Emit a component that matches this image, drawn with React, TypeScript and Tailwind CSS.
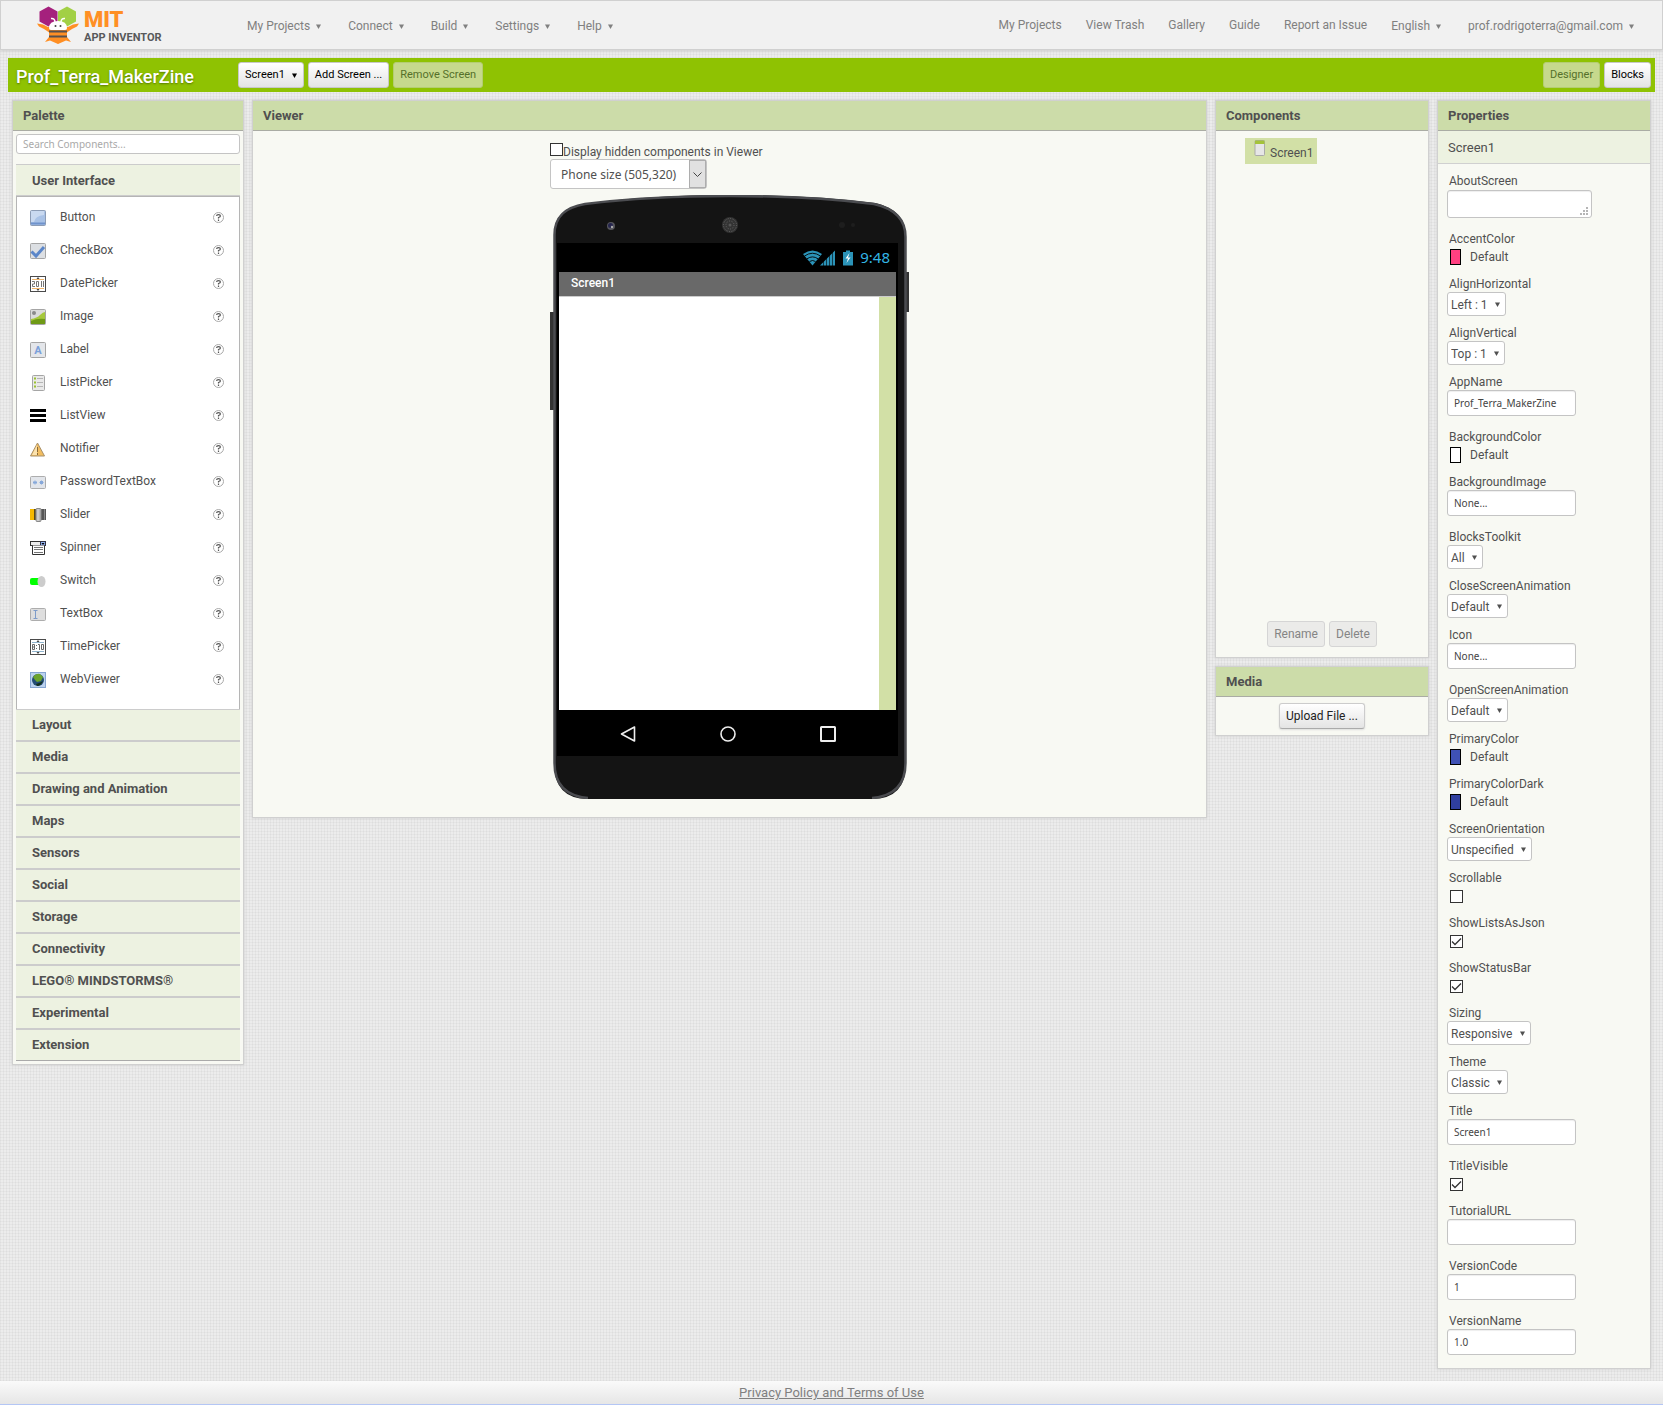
import { useState } from 'react';
import type { ReactNode } from 'react';

const leftMenu = ['My Projects', 'Connect', 'Build', 'Settings', 'Help'];
const rightLinks = ['My Projects', 'View Trash', 'Gallery', 'Guide', 'Report an Issue'];
const rightMenu = ['English', 'prof.rodrigoterra@gmail.com'];

const categories = [
  'Layout',
  'Media',
  'Drawing and Animation',
  'Maps',
  'Sensors',
  'Social',
  'Storage',
  'Connectivity',
  'LEGO® MINDSTORMS®',
  'Experimental',
  'Extension',
];

type Property = {
  name: string;
  type: 'textarea' | 'text' | 'select' | 'color' | 'check';
  value?: string;
  checked?: boolean;
};

const properties: Property[] = [
  { name: 'AboutScreen', type: 'textarea' },
  { name: 'AccentColor', type: 'color', value: '#ff4081' },
  { name: 'AlignHorizontal', type: 'select', value: 'Left : 1' },
  { name: 'AlignVertical', type: 'select', value: 'Top : 1' },
  { name: 'AppName', type: 'text', value: 'Prof_Terra_MakerZine' },
  { name: 'BackgroundColor', type: 'color', value: '#ffffff' },
  { name: 'BackgroundImage', type: 'text', value: 'None...' },
  { name: 'BlocksToolkit', type: 'select', value: 'All' },
  { name: 'CloseScreenAnimation', type: 'select', value: 'Default' },
  { name: 'Icon', type: 'text', value: 'None...' },
  { name: 'OpenScreenAnimation', type: 'select', value: 'Default' },
  { name: 'PrimaryColor', type: 'color', value: '#3f51b5' },
  { name: 'PrimaryColorDark', type: 'color', value: '#303f9f' },
  { name: 'ScreenOrientation', type: 'select', value: 'Unspecified' },
  { name: 'Scrollable', type: 'check', checked: false },
  { name: 'ShowListsAsJson', type: 'check', checked: true },
  { name: 'ShowStatusBar', type: 'check', checked: true },
  { name: 'Sizing', type: 'select', value: 'Responsive' },
  { name: 'Theme', type: 'select', value: 'Classic' },
  { name: 'Title', type: 'text', value: 'Screen1' },
  { name: 'TitleVisible', type: 'check', checked: true },
  { name: 'TutorialURL', type: 'text', value: '' },
  { name: 'VersionCode', type: 'text', value: '1' },
  { name: 'VersionName', type: 'text', value: '1.0' },
];

// 16x16 drawings for the palette
const paletteItems: { name: string; icon: ReactNode }[] = [
  {
    name: 'Button',
    icon: (
      <>
        <rect x="0.5" y="0.5" width="15" height="15" rx="1" fill="#a9c2e6" stroke="#8c9cb5" />
        <path d="M1 1h13v4Q5 6 4 12H1z" fill="#c9d9f0" />
        <path d="M1 13.5h14" stroke="#6f93cc" strokeWidth="2" />
      </>
    ),
  },
  {
    name: 'CheckBox',
    icon: (
      <>
        <rect x="0.5" y="0.5" width="15" height="15" rx="1" fill="#dcdfe3" stroke="#a5a5a5" />
        <path d="M1.500 8.500l4.500 4.500L14 4" fill="none" stroke="#5b86c9" strokeWidth="3" />
      </>
    ),
  },
  {
    name: 'DatePicker',
    icon: (
      <>
        <rect x="0.5" y="0.5" width="15" height="15" fill="#fff" stroke="#4a4a4a" />
        <path d="M2 3.500h12M2 12.500h12" stroke="#f0b46a" />
        <path d="M6.500 3h3L8 1zM6.500 13h3L8 15z" fill="#444" />
        <path d="M2 5.500h2.500v2.500h-2v2.500h2.500M6.500 5.500h2v5h-2zM11.500 5v6M13.500 5v6" fill="none" stroke="#777" />
      </>
    ),
  },
  {
    name: 'Image',
    icon: (
      <>
        <rect x="0.5" y="0.5" width="15" height="15" rx="1" fill="#dcdcdc" stroke="#a5a5a5" />
        <path d="M1 10Q7 9 10 6T15 3v12H1z" fill="#a6c83c" />
        <path d="M1 15v-3q6-3 14-2v5z" fill="#6f9a16" />
        <circle cx="4" cy="4" r="2" fill="#8a8a8a" />
      </>
    ),
  },
  {
    name: 'Label',
    icon: (
      <>
        <rect x="0.5" y="0.5" width="15" height="15" rx="1" fill="#e4e6ea" stroke="#a5a5a5" />
        <text x="8" y="12" textAnchor="middle" fontSize="11" fontWeight="700" fontFamily="Roboto, sans-serif" fill="#7ba0da">
          A
        </text>
      </>
    ),
  },
  {
    name: 'ListPicker',
    icon: (
      <>
        <rect x="2.500" y="0.5" width="12" height="15" rx="1" fill="#e9e9e9" stroke="#a5a5a5" />
        <path d="M4 3.500h2M4 7.500h2M4 11.500h2" stroke="#9ac22e" strokeWidth="2" />
        <path d="M7 3.500h6M7 7.500h6M7 11.500h6" stroke="#b5b5b5" />
      </>
    ),
  },
  {
    name: 'ListView',
    icon: <path d="M0 2.500h16M0 7.500h16M0 12.500h16" stroke="#000" strokeWidth="3" />,
  },
  {
    name: 'Notifier',
    icon: (
      <>
        <path d="M7.500 2L14.500 15H0.500z" fill="#f2bd60" stroke="#a8906a" strokeLinejoin="round" />
        <path d="M7 4L2 14h5z" fill="#fbe3b0" />
        <path d="M7.500 6v5M7.500 12v2" stroke="#8a6a38" />
      </>
    ),
  },
  {
    name: 'PasswordTextBox',
    icon: (
      <>
        <rect x="0.5" y="2.500" width="15" height="12" rx="1" fill="#e2e5ea" stroke="#adadad" />
        <path d="M3 8.500h4M5 6.500v4M9.500 8.500h4M11.500 6.500v4M3.500 7l3 3M6.500 7l-3 3M10 7l3 3M13 7l-3 3" stroke="#86a8da" />
      </>
    ),
  },
  {
    name: 'Slider',
    icon: (
      <>
        <rect x="0" y="2" width="6" height="11" fill="#f5b800" />
        <rect x="11" y="2" width="5" height="11" fill="#555" />
        <rect x="4" y="2" width="2" height="11" fill="#5a4a1a" />
        <rect x="6" y="1.500" width="5" height="13" rx="1" fill="#b8b8b8" stroke="#8a8a8a" />
        <path d="M8 2v12" stroke="#ddd" />
        <path d="M14.500 2v11" stroke="#888" />
      </>
    ),
  },
  {
    name: 'Spinner',
    icon: (
      <>
        <rect x="0.5" y="1.500" width="15" height="4" fill="#eee" stroke="#333" />
        <rect x="10.500" y="1.500" width="5" height="4" fill="#8fb0ef" stroke="#334" />
        <path d="M11.500 3h3L13 5z" fill="#000" />
        <path d="M2.500 5.500v9h12v-9" fill="#fff" stroke="#333" />
        <path d="M4 7.500h9M4 9.500h9M4 12.500h9" stroke="#777" />
      </>
    ),
  },
  {
    name: 'Switch',
    icon: (
      <>
        <rect x="0" y="5" width="13" height="7" rx="2" fill="#0f0" />
        <ellipse cx="11.500" cy="8.500" rx="4" ry="5.500" fill="#ccc" />
      </>
    ),
  },
  {
    name: 'TextBox',
    icon: (
      <>
        <rect x="0.5" y="2.500" width="15" height="12" rx="1" fill="#dedede" stroke="#adadad" />
        <path d="M3.500 4.500h4M3.500 12.500h4M5.500 4.500v8" stroke="#7f9cc9" />
      </>
    ),
  },
  {
    name: 'TimePicker',
    icon: (
      <>
        <rect x="0.5" y="0.5" width="15" height="15" fill="#fff" stroke="#4a4a4a" />
        <path d="M2 3.500h12M2 12.500h12" stroke="#8fb3cc" />
        <path d="M6.500 3h3L8 1zM6.500 13h3L8 15z" fill="#444" />
        <path d="M2.500 5.500h2v5h-2zM2.500 8h2M6.500 6v1M6.500 9v1M8 5.500h1.500V11M11.500 5.500h2v5h-2z" fill="none" stroke="#666" />
      </>
    ),
  },
  {
    name: 'WebViewer',
    icon: (
      <>
        <rect x="0.5" y="0.5" width="15" height="15" fill="#bcd2ee" stroke="#85a5d2" />
        <circle cx="8" cy="8" r="6" fill="#234d75" />
        <path d="M3 5q3-4 7-3l3 3-2 4-4 1-2-2z" fill="#6ba32c" />
        <path d="M6 12q4-1 7-3-2 5-6 5z" fill="#15301c" />
      </>
    ),
  },
];

function Caret({ className = '' }: { className?: string }) {
  return (
    <svg className={`h-[5px] w-[5px] shrink-0 ${className}`} viewBox="0 0 5 5" fill="currentColor" aria-hidden="true">
      <path d="M0 0.500h5L2.500 5z" />
    </svg>
  );
}

function Logo() {
  return (
    <a href="#" className="flex w-[210px] shrink-0 items-start gap-[5px]" aria-label="MIT App Inventor">
      <svg className="h-[38px] w-[42px] shrink-0" viewBox="0 0 42 38" aria-hidden="true">
        <path d="M11.500 0.500L20.500 5.500V15.500L11.500 20.500L2.500 15.500V5.500z" fill="#a5207d" />
        <path d="M30 0.500L39 5.500V15.500L30 20.500L21 15.500V5.500z" fill="#a2d045" />
        <path d="M0 17.500L6 18.500 11 21h20l5-2.500 6-1-2 3-5 2.500-6 4H13l-6-4-5-2.500z" fill="#ff8f24" />
        <path d="M12 31l-4 5 5-1.500 8 3.500 8-3.500 5 1.500-4-5z" fill="#ff8f24" />
        <path d="M12 22h18v9l-9 6.500L12 31z" fill="#ff8f24" />
        <path d="M12 22Q12 15 21 15T30 22q0 2-2 2H14q-2 0-2-2z" fill="#fff" />
        <path d="M14 12.500q4-0.500 4 4M28 12.500q-4-0.500-4 4" fill="none" stroke="#fff" strokeWidth="1.500" />
        <circle cx="18.500" cy="20" r="1" fill="#444" />
        <circle cx="23.500" cy="20" r="1" fill="#444" />
        <path d="M12 25.500h18M12 30.500h18" stroke="#57504e" strokeWidth="2" />
      </svg>
      <span className="flex flex-col pt-[3px]">
        <span className="text-[22px] leading-[22px] font-black text-[#ff8f24]">MIT</span>
        <span className="text-[11px] leading-[13px] font-bold text-[#58595b]">APP INVENTOR</span>
      </span>
    </a>
  );
}

function TopBar() {
  return (
    <header className="flex h-[50px] items-center justify-between border border-[#d0d0d0] bg-[#f1f1f1] pr-7 pl-9 text-[12px] text-[#808080] shadow-[0_1px_3px_#ccc]">
      <div className="flex items-center">
        <Logo />
        <nav className="flex items-center gap-[27px]">
          {leftMenu.map((item) => (
            <button key={item} className="flex items-center gap-[6px] pt-[2px]">
              {item}
              <Caret />
            </button>
          ))}
        </nav>
      </div>
      <nav className="flex items-center gap-6">
        {rightLinks.map((item) => (
          <a key={item} href="#">
            {item}
          </a>
        ))}
        {rightMenu.map((item) => (
          <button key={item} className="flex items-center gap-[6px] pt-[2px] last:ml-[3px]">
            {item}
            <Caret />
          </button>
        ))}
      </nav>
    </header>
  );
}

const barButton =
  'flex h-[26px] items-center gap-[7px] rounded-[3px] border border-[#c8c8c8] bg-linear-to-b from-white to-[#e4e4e4] px-[6px] pt-px text-[11px] text-black';
const barButtonOff =
  'flex h-[26px] items-center rounded-[3px] border border-[#b4cd72] bg-[#c6d98d] px-[6px] pt-px text-[11px] text-[#55702a]';

function ProjectBar() {
  return (
    <div className="mx-2 mt-2 flex h-[34px] items-center bg-[#8fc202] pr-1 pl-2">
      <h1 className="w-[222px] pt-[2px] text-[18px] font-medium text-white [text-shadow:0_1px_2px_#557700]">Prof_Terra_MakerZine</h1>
      <div className="flex gap-1">
        <button className={barButton}>
          Screen1
          <Caret />
        </button>
        <button className={barButton}>Add Screen ...</button>
        <button className={barButtonOff} disabled>
          Remove Screen
        </button>
      </div>
      <div className="ml-auto flex gap-1">
        <button className={barButtonOff} disabled>
          Designer
        </button>
        <button className={barButton}>Blocks</button>
      </div>
    </div>
  );
}

function Panel({ title, className = '', children }: { title: string; className?: string; children: ReactNode }) {
  return (
    <section className={`border border-[#d0d0d0] bg-[#f8f9f3] shadow-[0_0_3px_#ccc] ${className}`}>
      <h2 className="h-[30px] shrink-0 border-b border-[#aaaca4] bg-[#ccdca9] px-[10px] text-[13px] leading-[29px] font-bold text-[#505050]">
        {title}
      </h2>
      {children}
    </section>
  );
}

function Palette() {
  return (
    <Panel title="Palette" className="w-[232px] shrink-0">
      <div className="px-[3px] pt-[3px] pb-[3px]">
        <input
          aria-label="Search Components"
          placeholder="Search Components..."
          className="block h-5 w-full rounded-[3px] border border-[#c4c4c4] bg-white px-[6px] font-['Noto_Sans',sans-serif] text-[10px] placeholder:text-[#a9a9a9]"
        />
        <button className="mt-[10px] block h-8 w-full border-y border-[#ccc] bg-[#edf2e1] px-4 pt-px text-left text-[13px] font-bold text-[#505050]">
          User Interface
        </button>
        <ul className="border-x border-t border-[#b5b5b5] bg-white pt-1 pb-[13px]">
          {paletteItems.map((item) => (
            <li key={item.name} className="flex h-[33px] items-center pr-[15px] pl-[13px] text-[12px] text-[#505050]">
              <svg className="h-4 w-4 shrink-0" viewBox="0 0 16 16" aria-hidden="true">
                {item.icon}
              </svg>
              <span className="ml-[14px] grow pb-[2px]">{item.name}</span>
              <button
                aria-label={`Help for ${item.name}`}
                className="flex h-[11px] w-[11px] items-center justify-center rounded-full border border-[#aaa] text-[#555]"
              >
                <svg className="h-[7px] w-[5px]" viewBox="0 0 5 7" fill="none" stroke="currentColor" strokeWidth="1.200">
                  <path d="M0.600 2Q0.600 0.600 2.500 0.600T4.400 2Q4.400 3 2.500 3.500V4.500M2.500 5.500V7" />
                </svg>
              </button>
            </li>
          ))}
        </ul>
        {categories.map((name) => (
          <button
            key={name}
            className="block h-8 w-full border-y border-[#ccc] bg-[#edf2e1] px-4 text-left text-[13px] font-bold text-[#505050] last:border-b-[#aaa]"
          >
            {name}
          </button>
        ))}
      </div>
    </Panel>
  );
}

function Phone() {
  return (
    <div className="relative flex h-[604px] flex-col px-[7px] pt-12">
      <svg className="absolute inset-0 h-full w-full" viewBox="0 0 359 604" aria-hidden="true">
        <rect x="0" y="117" width="5" height="98" fill="#333" />
        <rect x="354" y="77" width="5" height="40" fill="#333" />
        <path
          d="M4 40C4 20 16 12 34 9Q100 0 180 0T325 8C343 12 356 22 356 42V568Q356 604 322 604H38Q4 604 4 568z"
          fill="#141414"
        />
        <path
          d="M38 603Q4.500 600 4.500 568V40C4.500 20 17 12 35 9Q100 1 180 1T324 9C342 13 355.500 23 355.500 42V568Q355.500 600 322 603"
          fill="none"
          stroke="#4b4c50"
          strokeWidth="2.500"
        />
        <circle cx="61" cy="31" r="4" fill="#55555c" />
        <circle cx="60.500" cy="30.500" r="2.500" fill="#26264e" />
        <circle cx="62" cy="32" r="1.200" fill="#aaa" />
        <circle cx="180" cy="30" r="8" fill="#333" />
        <circle cx="180" cy="30" r="6.500" fill="none" stroke="#666" strokeDasharray="1 1.500" />
        <circle cx="180" cy="30" r="4" fill="none" stroke="#666" strokeDasharray="1 1.500" />
        <circle cx="180" cy="30" r="1.500" fill="#555" />
        <circle cx="292" cy="30" r="3" fill="#1e1e1e" />
        <circle cx="303" cy="30" r="2" fill="#1e1e1e" />
      </svg>
      <div className="relative mr-1 bg-black px-[2px]">
        <div className="flex h-[29px] items-center justify-end pr-[6px] text-[#33b5e5]">
          <svg className="h-4 w-[50px]" viewBox="0 0 50 16" fill="#2b93b8" aria-hidden="true">
            <path d="M0 4Q9.500-3 19 4L9.500 15.500z" />
            <path d="M1.500 6Q9.500 0.500 17.500 6M4 8.800Q9.500 5 15 8.800M6.500 11.500Q9.500 9.500 12.500 11.500" fill="none" stroke="#000" strokeWidth="0.900" />
            <path d="M17 15.500L32 0.500V15.500z" />
            <path d="M20.500 9V16M23.500 6V16M26.500 4V16M29.500 1V16" stroke="#000" strokeWidth="0.600" />
            <path d="M40 2h3V0.500h4V2h3v13.500H40z" />
            <path d="M46.500 3l-4 5.500h2.500l-1.500 4.500 4-5.500H45z" fill="#fff" />
          </svg>
          <span className="ml-[7px] font-['Noto_Sans',sans-serif] text-[15px] leading-[29px]">9:48</span>
        </div>
        <div className="h-6 bg-[#696969] px-3 text-[12px] leading-[22px] font-medium text-white">Screen1</div>
        <div className="flex h-[414px] border-t border-[#ccc] bg-white">
          <div className="grow" />
          <div className="w-[17px] bg-[#d2e0a6]" />
        </div>
        <div className="flex h-[46px] items-center justify-between pt-[2px] pr-[60px] pl-[61px]">
          <svg className="h-4 w-4" viewBox="0 0 16 16" fill="none" stroke="#eee" strokeWidth="1.600" aria-hidden="true">
            <path d="M14.500 1v14L1.500 8z" strokeLinejoin="round" />
          </svg>
          <svg className="h-4 w-4" viewBox="0 0 16 16" fill="none" stroke="#eee" strokeWidth="1.600" aria-hidden="true">
            <circle cx="8" cy="8" r="7" />
          </svg>
          <svg className="h-4 w-4" viewBox="0 0 16 16" fill="none" stroke="#eee" strokeWidth="2" aria-hidden="true">
            <rect x="1" y="1" width="14" height="14" rx="0.500" />
          </svg>
        </div>
      </div>
    </div>
  );
}

function Viewer() {
  return (
    <Panel title="Viewer" className="min-w-0 grow">
      <div className="mx-auto w-[359px] pt-3 pb-[18px]">
        <label className="flex h-4 items-start text-[12px] leading-4 text-[#505050]">
          <CheckBox />
          <span className="pt-px">Display hidden components in Viewer</span>
        </label>
        <div className="relative h-[30px] w-[157px]">
          <select
            aria-label="Preview size"
            className="h-full w-full appearance-none rounded-[3px] border border-[#c4c4c4] bg-white px-[10px] pt-px font-['Noto_Sans',sans-serif] text-[12px] text-[#505050]"
          >
            <option>Phone size (505,320)</option>
          </select>
          <span className="pointer-events-none absolute inset-y-px right-px flex w-[17px] items-center justify-center border border-[#adadad] bg-[#e1e1e1]">
            <svg className="h-[5px] w-[9px]" viewBox="0 0 9 5" fill="none" stroke="#444">
              <path d="M0.500 0.500l4 4 4-4" />
            </svg>
          </span>
        </div>
        <div className="pt-[6px]">
          <Phone />
        </div>
      </div>
    </Panel>
  );
}

function CheckBox({ id, defaultChecked = false }: { id?: string; defaultChecked?: boolean }) {
  const [checked, setChecked] = useState(defaultChecked);
  return (
    <span className="relative block h-[13px] w-[13px]">
      <input
        id={id}
        type="checkbox"
        checked={checked}
        onChange={(e) => setChecked(e.target.checked)}
        className="block h-[13px] w-[13px] appearance-none border border-[#333] bg-white"
      />
      {checked && (
        <svg className="pointer-events-none absolute inset-0" viewBox="0 0 13 13" fill="none" stroke="#333" strokeWidth="1.300">
          <path d="M2 6.500l3 3 6-6" />
        </svg>
      )}
    </span>
  );
}

function Components() {
  return (
    <Panel title="Components" className="flex h-[558px] flex-col">
      <div className="flex grow flex-col items-start justify-between pt-[7px] pb-[10px]">
        <button className="ml-[29px] flex h-[26px] items-center gap-[5px] bg-[#d2e0a6] pr-1 pl-[6px] text-[12px] text-[#505050]">
          <svg className="mb-[6px] ml-[2px] h-4 w-3" viewBox="0 0 12 16" aria-hidden="true">
            <rect x="2" y="0.5" width="9.500" height="15" rx="1" fill="#e6e6e6" stroke="#aaa" />
            <rect x="2" y="0.5" width="9.500" height="3.500" fill="#a4c33a" />
          </svg>
          <span className="pt-[3px]">Screen1</span>
        </button>
        <div className="flex gap-1 self-center">
          {['Rename', 'Delete'].map((name) => (
            <button
              key={name}
              disabled
              className="h-[26px] rounded-[3px] border border-[#d5d5d5] bg-[#ebebe9] px-[6px] text-[12px] text-[#858585]"
            >
              {name}
            </button>
          ))}
        </div>
      </div>
    </Panel>
  );
}

function Media() {
  return (
    <Panel title="Media">
      <div className="flex justify-center py-[6px]">
        <button className="h-[26px] rounded-[3px] border border-[#ccc] border-b-[#aaa] bg-linear-to-b from-white to-[#e4e4e4] px-[6px] text-[12px] text-[#222] shadow-[0_1px_2px_#ddd]">
          Upload File ...
        </button>
      </div>
    </Panel>
  );
}

function PropertyField({ id, property }: { id: string; property: Property }) {
  const { type, value } = property;
  if (type === 'textarea') {
    return (
      <div className="relative mb-[13px] h-[29px] w-[145px] pt-px">
        <textarea
          id={id}
          className="block h-7 w-full resize-none rounded-[3px] border border-[#c4c4c4] bg-white px-[6px] font-['Noto_Sans',sans-serif] text-[10px] shadow-[inset_0_1px_1px_#eee]"
        />
        <svg className="pointer-events-none absolute right-1 bottom-[3px] h-2 w-2" viewBox="0 0 8 8" fill="#b5b5b5">
          <path d="M6 0h2v2H6zM3 3h2v2H3zM6 3h2v2H6zM0 6h2v2H0zM3 6h2v2H3zM6 6h2v2H6z" />
        </svg>
      </div>
    );
  }
  if (type === 'text') {
    return (
      <input
        id={id}
        type="text"
        defaultValue={value}
        className="mb-[13px] block h-[26px] w-[129px] rounded-[3px] border border-[#c4c4c4] bg-white px-[6px] font-['Noto_Sans',sans-serif] text-[10px] text-[#444] shadow-[inset_0_1px_1px_#eee]"
      />
    );
  }
  if (type === 'select') {
    return (
      <div className="relative mb-[9px] h-6 w-fit text-[#505050]">
        <select
          id={id}
          className="block h-6 appearance-none rounded-[3px] border border-[#c4c4c4] bg-white pt-px pr-[17px] pl-[3px] text-[12px]"
        >
          <option>{value}</option>
        </select>
        <Caret className="pointer-events-none absolute top-[10px] right-[6px]" />
      </div>
    );
  }
  if (type === 'color') {
    return (
      <button id={id} className="ml-[3px] flex h-[29px] items-start gap-[9px] pt-[2px] text-[12px] leading-4 text-[#505050]">
        <span className="h-4 w-[11px] border border-black" style={{ backgroundColor: value }} />
        Default
      </button>
    );
  }
  return (
    <div className="ml-[3px] h-[29px] pt-1">
      <CheckBox id={id} defaultChecked={property.checked} />
    </div>
  );
}

function Properties() {
  return (
    <Panel title="Properties" className="w-[214px] shrink-0">
      <p className="h-[33px] border-b border-[#d0d0d0] bg-[#edf2e1] px-[10px] text-[13px] leading-[33px] text-[#505050]">Screen1</p>
      <div className="px-[9px] pt-[9px]">
        {properties.map((property) => {
          const id = `prop-${property.name}`;
          return (
            <div key={property.name}>
              <label htmlFor={id} className="block pl-[2px] text-[12px] leading-4 text-[#505050]">
                {property.name}
              </label>
              <PropertyField id={id} property={property} />
            </div>
          );
        })}
      </div>
    </Panel>
  );
}

export default function App() {
  return (
    <div className="flex min-h-screen flex-col bg-[#ececec] bg-[repeating-linear-gradient(0deg,#00000008_0_1px,transparent_1px_3px),repeating-linear-gradient(90deg,#00000009_0_1px,transparent_1px_3px)] font-[Roboto,sans-serif]">
      <TopBar />
      <ProjectBar />
      <main className="mx-3 mt-2 flex items-start gap-2">
        <Palette />
        <Viewer />
        <div className="flex w-[214px] shrink-0 flex-col gap-2">
          <Components />
          <Media />
        </div>
        <Properties />
      </main>
      <footer className="mt-auto h-6 border-b border-[#b4c6f5] bg-linear-to-b from-[#fafafa] to-[#e6e6e6] text-center text-[13px] leading-6 text-[#808080]">
        <a href="#" className="underline">
          Privacy Policy and Terms of Use
        </a>
      </footer>
    </div>
  );
}
